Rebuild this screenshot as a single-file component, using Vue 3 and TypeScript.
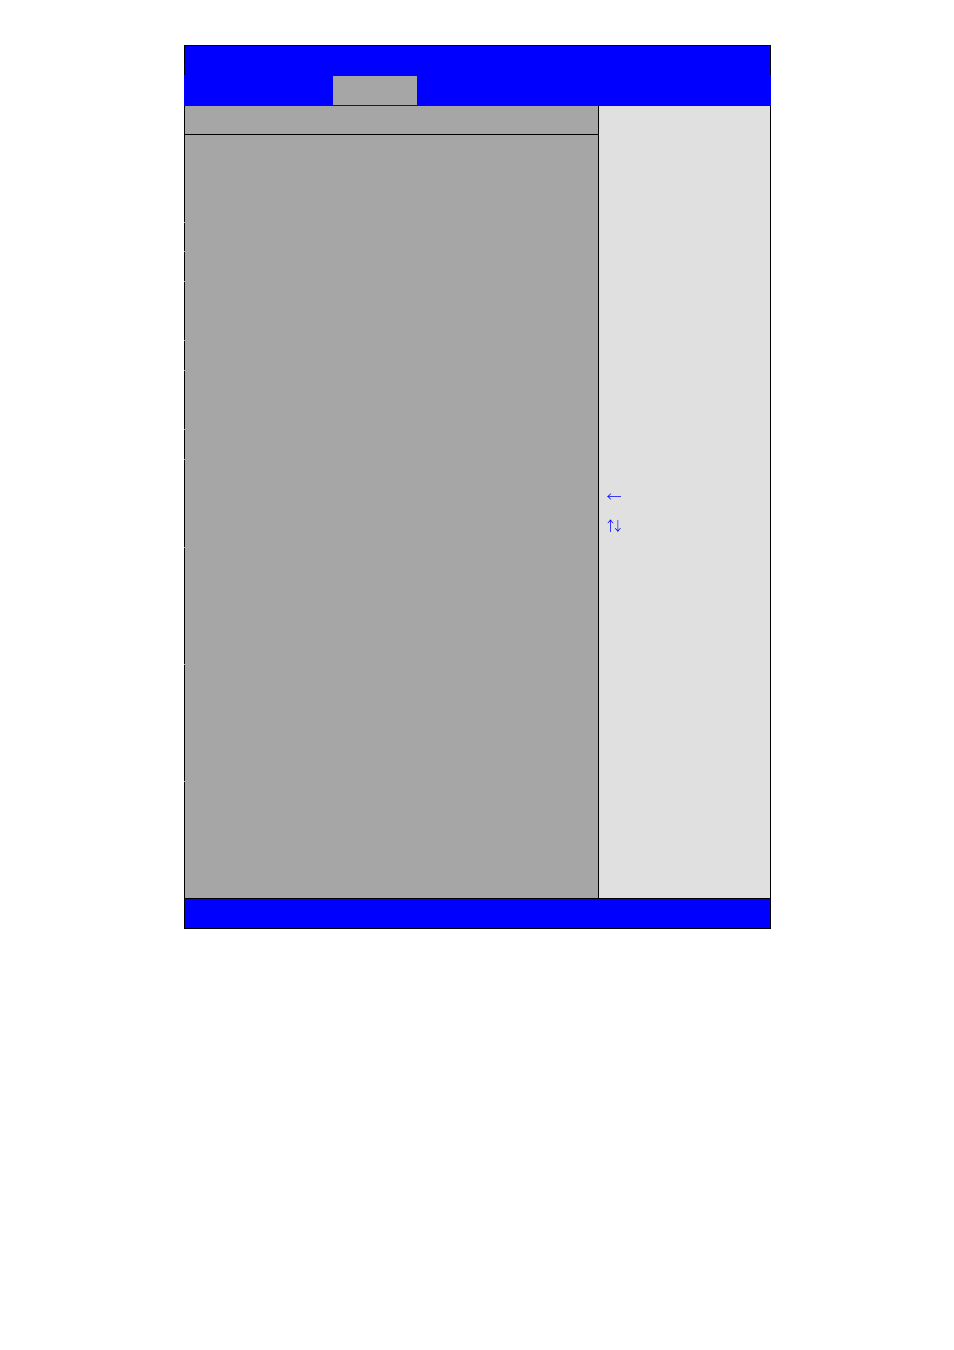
<script setup lang="ts">
const rowHeights: number[] = [87, 28, 29, 58, 29, 58, 29, 87, 116, 116, 116]
</script>

<template>
  <main class="page">
    <section class="screen">
      <header class="title"></header>
      <nav class="tabs">
        <div class="tab"></div>
      </nav>
      <div class="body">
        <div class="settings">
          <div class="heading"></div>
          <div class="rows">
            <div
              v-for="(height, index) in rowHeights"
              :key="index"
              class="row"
              :style="{ minHeight: height + 'px' }"
            ></div>
          </div>
        </div>
        <aside class="help">
          <ul class="keys">
            <li>
              <svg width="16" height="14" viewBox="0 0 16 14" aria-hidden="true">
                <path class="shaft" d="M1 7.5H14" />
                <path class="head" d="M3.6 4.6Q2.6 6.8 0.6 7.5Q2.6 8.2 3.6 10.4" />
              </svg>
            </li>
            <li>
              <svg width="16" height="14" viewBox="0 0 16 14" aria-hidden="true">
                <path class="shaft" d="M3.5 1V13" />
                <path class="head" d="M0.8 3.8Q2.8 2.8 3.5 0.8Q4.2 2.8 6.2 3.8" />
                <path class="shaft soft" d="M10.8 1V12" />
                <path class="head" d="M8.1 9.4Q10.1 10.4 10.8 12.4Q11.5 10.4 13.5 9.4" />
              </svg>
            </li>
          </ul>
        </aside>
      </div>
      <footer class="footer"></footer>
    </section>
  </main>
</template>

<style>
body {
  background: #fff;
}
</style>

<style scoped>
.page {
  padding: 45px 183px 45px 184px;
}
.title {
  height: 29px;
  background: #00f;
  border: 1px solid #000;
  border-bottom: 0;
}
.tabs {
  display: flex;
  padding: 1px 0 1px 149px;
  background: #00f;
}
.tab {
  width: 84px;
  height: 29px;
  background: #a6a6a6;
}
.body {
  display: grid;
  grid-template-columns: 414fr 173fr;
}
.settings {
  background: #a6a6a6;
}
.heading {
  height: 28px;
  border-left: 1px solid #000;
  border-bottom: 1px solid #000;
}
.rows {
  display: flex;
  flex-direction: column;
  gap: 1px;
}
.row {
  border-left: 1px solid #000;
}
.help {
  background: #e0e0e0;
  border-left: 1px solid #000;
  border-right: 1px solid #000;
}
.keys {
  display: flex;
  flex-direction: column;
  gap: 16px;
  margin: 0;
  padding: 383px 0 0 8px;
  list-style: none;
}
.keys svg {
  display: block;
}
.shaft,
.head {
  fill: none;
  stroke: #00f;
  stroke-width: 1;
}
.shaft {
  stroke-opacity: 0.75;
}
.soft {
  stroke-opacity: 0.6;
}
.footer {
  height: 29px;
  background: #00f;
  border: 1px solid #000;
}
</style>
